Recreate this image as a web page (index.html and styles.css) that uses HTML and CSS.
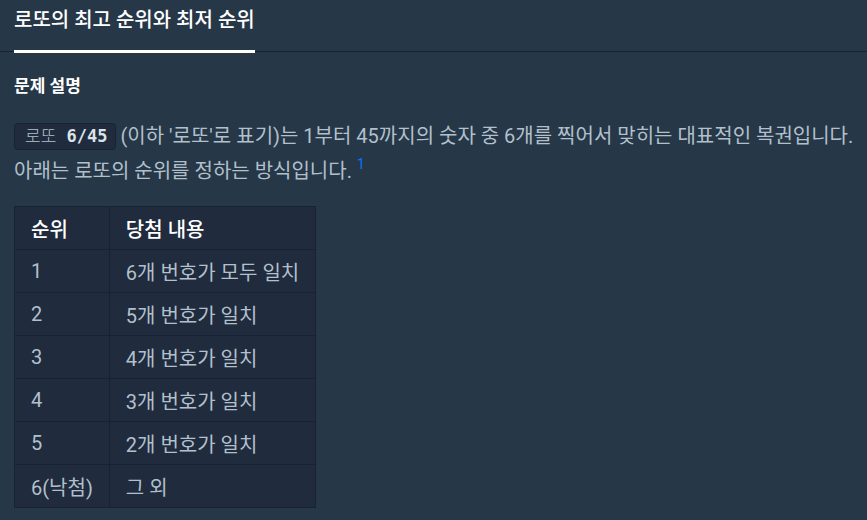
FILE: index.html
```html
<!DOCTYPE html>
<html lang="ko">
  <head>
    <meta charset="UTF-8" />
    <meta name="viewport" content="width=device-width, initial-scale=1.0" />
    <title>로또의 최고 순위와 최저 순위</title>
    <link rel="stylesheet" href="styles.css">
  </head>
  <body>
    <div class="tabs">
      <div class="tab active">로또의 최고 순위와 최저 순위</div>
    </div>
    <div class="guide">
      <h5>문제 설명</h5>
      <p><code>로또 <b>6/45</b></code>(이하 '로또'로 표기)는 1부터 45까지의 숫자 중 6개를 찍어서 맞히는 대표적인 복권입니다. 아래는 로또의 순위를 정하는 방식입니다. <sup><a href="#fn1">1</a></sup></p>
      <table class="rank">
        <thead>
          <tr><th>순위</th><th>당첨 내용</th></tr>
        </thead>
        <tbody>
          <tr><td>1</td><td>6개 번호가 모두 일치</td></tr>
          <tr><td>2</td><td>5개 번호가 일치</td></tr>
          <tr><td>3</td><td>4개 번호가 일치</td></tr>
          <tr><td>4</td><td>3개 번호가 일치</td></tr>
          <tr><td>5</td><td>2개 번호가 일치</td></tr>
          <tr><td>6(낙첨)</td><td>그 외</td></tr>
        </tbody>
      </table>
    </div>
  </body>
</html>
```

FILE: styles.css
```css
* {
  margin: 0;
  padding: 0;
  box-sizing: border-box;
}
body {
  background: #263747;
  color: #b2c0cc;
  font-family: Roboto, "Noto Sans CJK KR", sans-serif;
  font-size: 20px;
}
.tabs {
  padding: 0 14px;
  border-bottom: 1px solid #172334;
  height: 52px;
}
.tabs .tab {
  display: inline-block;
  height: 53px;
  line-height: 40px;
  color: #fff;
  font-size: 20px;
  font-weight: 500;
  border-bottom: 3px solid #fff;
}
.guide {
  padding: 22px 0 0 14px;
}
.guide h5 {
  color: #fff;
  font-size: 17px;
  font-weight: 700;
  line-height: 24px;
  margin-bottom: 21px;
}
.guide p {
  line-height: 35px;
  margin-bottom: 17px;
}
.guide code {
  display: inline-block;
  vertical-align: top;
  margin-top: 4px;
  background: #202b3d;
  border: 1px solid #172334;
  border-radius: 4px;
  padding: 0 8px 0 10px;
  line-height: 25px;
  margin-right: 4px;
  font-family: "DejaVu Sans Mono", "Noto Sans CJK KR", monospace;
  font-size: 17px;
  font-weight: 300;
}
.guide code b {
  font-weight: 700;
  color: #dbe3ea;
}
.guide sup {
  line-height: 0;
  vertical-align: 9px;
}
.guide sup a {
  color: #0078ff;
  text-decoration: none;
  font-size: 14px;
}
.rank {
  border-collapse: collapse;
  background: #202b3d;
  border: 1px solid #172334;
}
.rank th,
.rank td {
  border: 1px solid #172334;
  height: 43px;
  padding: 0 16px;
  text-align: left;
  white-space: nowrap;
}
.rank th {
  color: #fff;
  font-weight: 500;
}
.rank td:first-child,
.rank th:first-child {
  width: 92px;
}
.rank td:last-child,
.rank th:last-child {
  width: 206px;
}
```
